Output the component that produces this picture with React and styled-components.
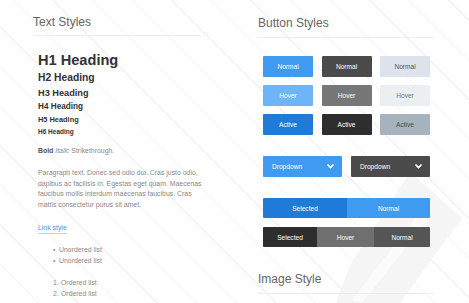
import React from 'react';
import styled, { createGlobalStyle } from 'styled-components';

const GlobalStyle = createGlobalStyle`
  html, body {
    margin: 0;
    padding: 0;
    background: #fff;
  }
  body {
    font-family: "Liberation Sans", Arial, Helvetica, sans-serif;
    -webkit-font-smoothing: antialiased;
  }
`;

const Page = styled.div`
  position: relative;
  width: 469px;
  height: 303px;
  overflow: hidden;
  display: flex;
  background: repeating-linear-gradient(
    45deg,
    #ffffff 0px,
    #ffffff 27px,
    #f1f1f1 27px,
    #f1f1f1 28px
  );
`;

const Watermark = styled.svg`
  position: absolute;
  left: 0;
  top: 0;
  pointer-events: none;
`;

const Column = styled.section`
  position: relative;
  z-index: 1;
  display: flex;
  flex-direction: column;
  margin-left: ${(p) => p.$left}px;
  width: ${(p) => p.$width}px;
`;

const Title = styled.h2`
  margin: ${(p) => p.$top}px 0 0;
  padding-bottom: ${(p) => p.$pad}px;
  border-bottom: 1px solid #ececec;
  font-size: 12px;
  line-height: 14px;
  font-weight: normal;
  color: #666;
`;

const TextBlock = styled.div`
  display: flex;
  flex-direction: column;
  padding-left: 5px;
  color: #888;
`;

const Heading = styled.div`
  font-weight: bold;
  color: #333;
  font-size: ${(p) => p.$size}px;
  line-height: ${(p) => p.$lh}px;
  margin-top: ${(p) => p.$mt}px;
  white-space: nowrap;
`;

const Small = styled.p`
  margin: ${(p) => p.$mt}px 0 0;
  font-size: 6.9px;
  line-height: ${(p) => p.$lh || 10}px;
  color: #888;
  white-space: nowrap;

  b { color: #555; }
`;

const Link = styled.a`
  align-self: flex-start;
  margin-top: 12px;
  font-size: 6.9px;
  line-height: 10px;
  color: #4a90e2;
  text-decoration: none;
  border-bottom: 1px solid #b9d5f4;
`;

const List = styled.ul`
  margin: ${(p) => p.$mt}px 0 0;
  padding: 0 0 0 15px;
  list-style: none;
  font-size: 6.9px;
  line-height: 11px;
  color: #888;
`;

const Item = styled.li`
  display: flex;
  gap: ${(p) => p.$gap}px;

  span:first-child {
    min-width: ${(p) => p.$markWidth}px;
  }
`;

const ButtonGrid = styled.div`
  display: grid;
  grid-template-columns: repeat(3, 50px);
  grid-auto-rows: 21px;
  column-gap: 8.5px;
  row-gap: 8px;
  margin: 18px 0 0 5px;
`;

const Button = styled.button`
  border: none;
  border-radius: 1px;
  padding: 0;
  font-family: inherit;
  font-size: 6.6px;
  background: ${(p) => p.$bg};
  color: ${(p) => p.$fg || '#fff'};
`;

const DropRow = styled.div`
  display: flex;
  gap: 9px;
  margin: 21px 0 0 5px;
`;

const Dropdown = styled.div`
  width: 79px;
  height: 21px;
  box-sizing: border-box;
  padding: 0 8px 0 9px;
  display: flex;
  align-items: center;
  justify-content: space-between;
  border-radius: 1px;
  font-size: 6.6px;
  color: #fff;
  background: ${(p) => p.$bg};
`;

const Segmented = styled.div`
  display: flex;
  width: 167px;
  height: 20px;
  margin: ${(p) => p.$mt}px 0 0 5px;
  border-radius: 1px;
  overflow: hidden;
`;

const Segment = styled.div`
  width: ${(p) => p.$w}px;
  display: flex;
  align-items: center;
  justify-content: center;
  font-size: 6.6px;
  color: #fff;
  background: ${(p) => p.$bg};
`;

const Chevron = () => (
  <svg width="7" height="5" viewBox="0 0 7 5">
    <polyline points="1,1 3.5,3.6 6,1" fill="none" stroke="#fff" strokeWidth="1.7" strokeLinecap="round" strokeLinejoin="round" />
  </svg>
);

const headings = [
  { label: 'H1 Heading', size: 14.6, lh: 18, mt: 15 },
  { label: 'H2 Heading', size: 10.3, lh: 14, mt: 2 },
  { label: 'H3 Heading', size: 9.2, lh: 12, mt: 2 },
  { label: 'H4 Heading', size: 8.2, lh: 10, mt: 3 },
  { label: 'H5 Heading', size: 7.4, lh: 10, mt: 3 },
  { label: 'H6 Heading', size: 6.5, lh: 8, mt: 3 },
];

const buttons = [
  ['Normal', '#3f9bef'], ['Normal', '#4b4b4b'], ['Normal', '#dde3ea', '#555'],
  ['Hover', '#6eb4f6'], ['Hover', '#777777'], ['Hover', '#eceff2', '#777'],
  ['Active', '#1f7bd7'], ['Active', '#2e2e2e'], ['Active', '#a6b3bf', '#4a4a4a'],
];

export default function App() {
  return (
    <>
      <GlobalStyle />
      <Page>
        <Watermark width="469" height="303" viewBox="0 0 469 303">
          <polygon points="410,172 462,218 400,303 336,303 350,265" fill="#f5f5f5" />
          <polygon points="352,300 420,212 428,220 362,303" fill="#fbfbfb" />
        </Watermark>

        <Column $left={33} $width={168}>
          <Title $top={15} $pad={6}>Text Styles</Title>
          <TextBlock>
            {headings.map((h) => (
              <Heading key={h.label} $size={h.size} $lh={h.lh} $mt={h.mt}>{h.label}</Heading>
            ))}
            <Small $mt={10}><b>Bold</b> <i>Italic</i> Strikethrough.</Small>
            <Small $mt={12} $lh={10.7}>
              Paragraph text. Donec sed odio dui. Cras justo odio,<br />
              dapibus ac facilisis in. Egestas eget quam. Maecenas<br />
              faucibus mollis interdum maecenas faucibus. Cras<br />
              mattis consectetur purus sit amet.
            </Small>
            <Link href="#">Link style</Link>
            <List $mt={10}>
              <Item $gap={3} $markWidth={3}><span>•</span><span>Unordered list</span></Item>
              <Item $gap={3} $markWidth={3}><span>•</span><span>Unordered list</span></Item>
            </List>
            <List $mt={11}>
              <Item $gap={2} $markWidth={6}><span>1.</span><span>Ordered list</span></Item>
              <Item $gap={2} $markWidth={6}><span>2.</span><span>Ordered list</span></Item>
            </List>
          </TextBlock>
        </Column>

        <Column $left={57} $width={175}>
          <Title $top={16} $pad={7}>Button Styles</Title>
          <ButtonGrid>
            {buttons.map(([label, bg, fg], i) => (
              <Button key={i} $bg={bg} $fg={fg}>{label}</Button>
            ))}
          </ButtonGrid>
          <DropRow>
            <Dropdown $bg="#3f9bef">Dropdown <Chevron /></Dropdown>
            <Dropdown $bg="#4b4b4b">Dropdown <Chevron /></Dropdown>
          </DropRow>
          <Segmented $mt={21}>
            <Segment $w={84} $bg="#1f7bd7">Selected</Segment>
            <Segment $w={83} $bg="#3f9bef">Normal</Segment>
          </Segmented>
          <Segmented $mt={9}>
            <Segment $w={54} $bg="#2e2e2e">Selected</Segment>
            <Segment $w={57} $bg="#6f6f6f">Hover</Segment>
            <Segment $w={56} $bg="#555555">Normal</Segment>
          </Segmented>
          <Title $top={25} $pad={7}>Image Style</Title>
        </Column>
      </Page>
    </>
  );
}
